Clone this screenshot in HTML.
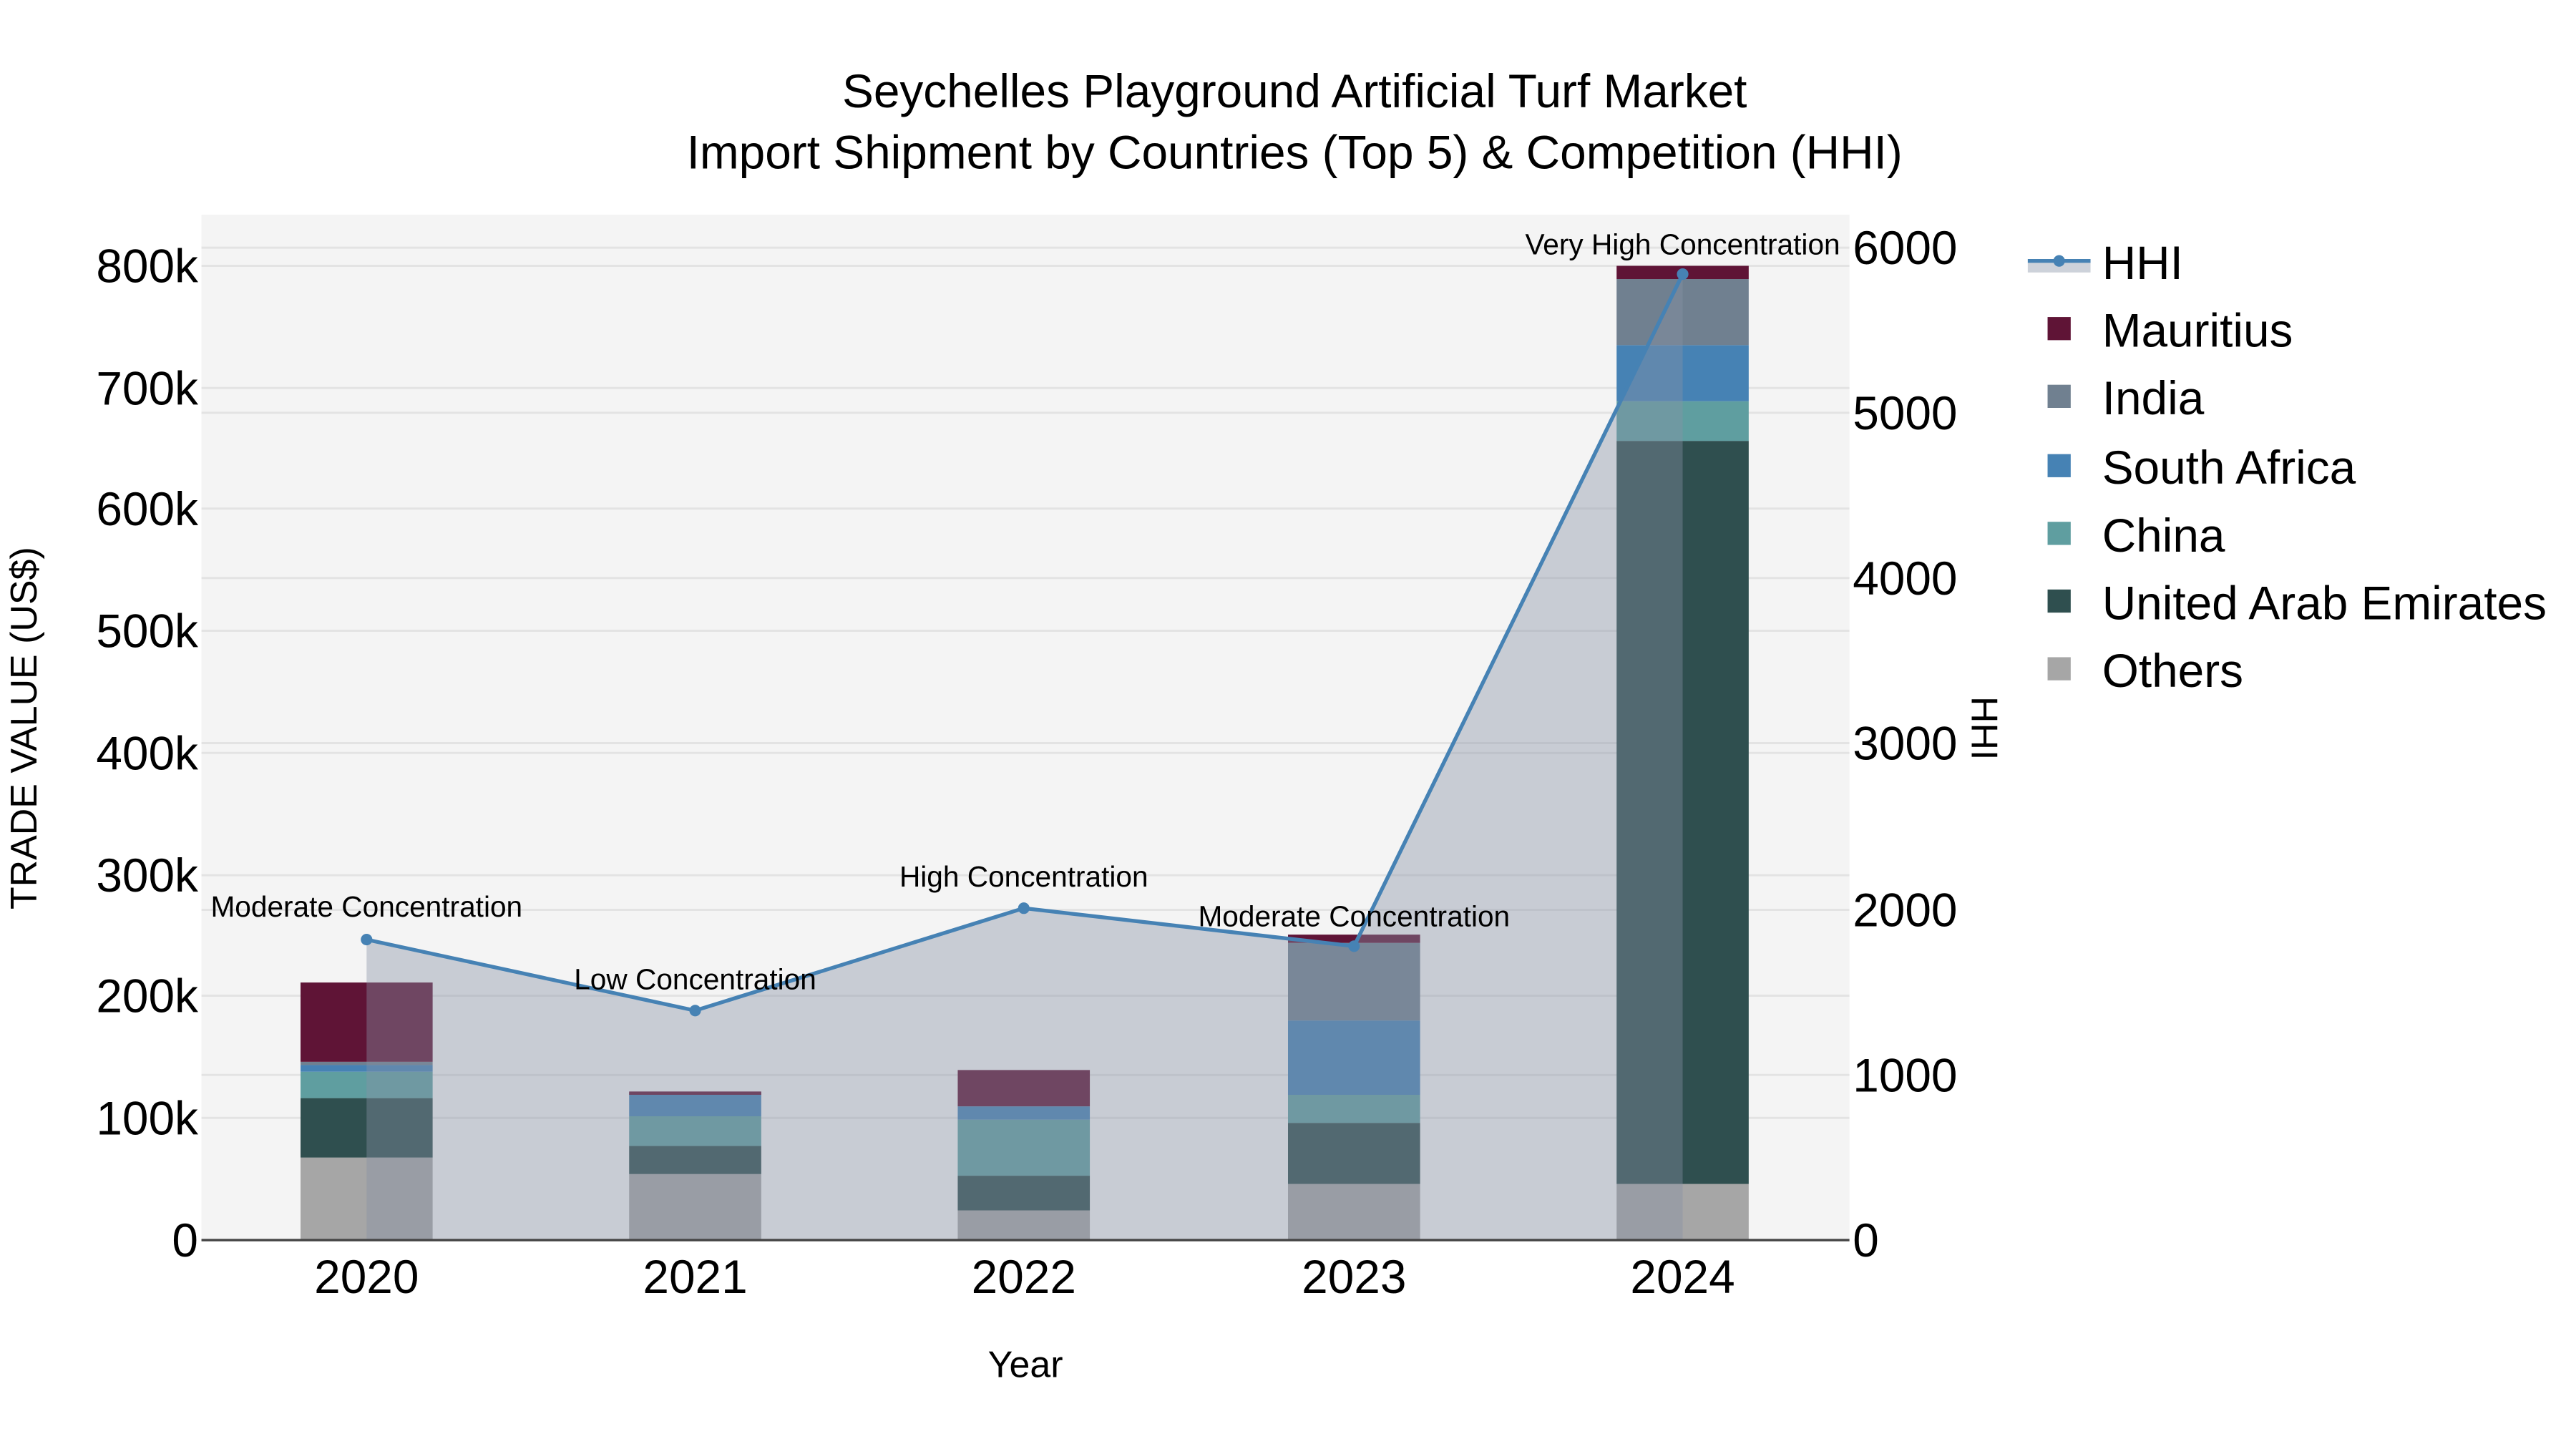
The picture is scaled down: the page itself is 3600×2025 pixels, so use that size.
<!DOCTYPE html>
<html><head><meta charset="utf-8"><style>html,body{margin:0;padding:0;background:#fff}svg{display:block}</style></head>
<body>
<svg width="3600" height="2025" viewBox="0 0 1560 877.5" xmlns="http://www.w3.org/2000/svg" font-family="'Liberation Sans', sans-serif">
<rect x="0" y="0" width="1560" height="877.5" fill="#fff"/>
<rect x="122" y="130" width="998" height="621" fill="#f4f4f4"/>
<g stroke="#e3e3e3" stroke-width="1.3">
<line x1="122" x2="1120" y1="677" y2="677"/><line x1="122" x2="1120" y1="603" y2="603"/><line x1="122" x2="1120" y1="530" y2="530"/><line x1="122" x2="1120" y1="456" y2="456"/><line x1="122" x2="1120" y1="382" y2="382"/><line x1="122" x2="1120" y1="308" y2="308"/><line x1="122" x2="1120" y1="235" y2="235"/><line x1="122" x2="1120" y1="161" y2="161"/>
<line x1="122" x2="1120" y1="651" y2="651"/><line x1="122" x2="1120" y1="551" y2="551"/><line x1="122" x2="1120" y1="450" y2="450"/><line x1="122" x2="1120" y1="350" y2="350"/><line x1="122" x2="1120" y1="250" y2="250"/><line x1="122" x2="1120" y1="150" y2="150"/>
</g>
<g>
<rect x="182" y="701" width="80" height="50" fill="#a6a6a6"/><rect x="182" y="665" width="80" height="36" fill="#2f4f4f"/><rect x="182" y="649" width="80" height="16" fill="#5f9ea0"/><rect x="182" y="645" width="80" height="4" fill="#4682b4"/><rect x="182" y="643" width="80" height="2" fill="#708090"/><rect x="182" y="595" width="80" height="48" fill="#5f1436"/>
<rect x="381" y="711" width="80" height="40" fill="#a6a6a6"/><rect x="381" y="694" width="80" height="17" fill="#2f4f4f"/><rect x="381" y="676" width="80" height="18" fill="#5f9ea0"/><rect x="381" y="663" width="80" height="13" fill="#4682b4"/><rect x="381" y="662" width="80" height="1" fill="#708090"/><rect x="381" y="661" width="80" height="2" fill="#5f1436"/>
<rect x="580" y="733" width="80" height="18" fill="#a6a6a6"/><rect x="580" y="712" width="80" height="21" fill="#2f4f4f"/><rect x="580" y="678" width="80" height="34" fill="#5f9ea0"/><rect x="580" y="670" width="80" height="8" fill="#4682b4"/><rect x="580" y="648" width="80" height="22" fill="#5f1436"/>
<rect x="780" y="717" width="80" height="34" fill="#a6a6a6"/><rect x="780" y="680" width="80" height="37" fill="#2f4f4f"/><rect x="780" y="663" width="80" height="17" fill="#5f9ea0"/><rect x="780" y="618" width="80" height="45" fill="#4682b4"/><rect x="780" y="571" width="80" height="47" fill="#708090"/><rect x="780" y="566" width="80" height="5" fill="#5f1436"/>
<rect x="979" y="717" width="80" height="34" fill="#a6a6a6"/><rect x="979" y="267" width="80" height="450" fill="#2f4f4f"/><rect x="979" y="243" width="80" height="24" fill="#5f9ea0"/><rect x="979" y="209" width="80" height="34" fill="#4682b4"/><rect x="979" y="169" width="80" height="40" fill="#708090"/><rect x="979" y="161" width="80" height="8" fill="#5f1436"/>
</g>
<polygon points="222,751 222,569 421,612 620,550 820,573 1019,166 1019,751" fill="rgb(134,146,166)" fill-opacity="0.4"/>
<line x1="122" x2="1120" y1="751" y2="751" stroke="#444" stroke-width="1.5"/>
<polyline points="222,569 421,612 620,550 820,573 1019,166" fill="none" stroke="#4682b4" stroke-width="2.3"/>
<g fill="#4682b4"><circle cx="222" cy="569" r="3.5"/><circle cx="421" cy="612" r="3.5"/><circle cx="620" cy="550" r="3.5"/><circle cx="820" cy="573" r="3.5"/><circle cx="1019" cy="166" r="3.5"/></g>
<g font-size="17.6" fill="#000" text-anchor="middle">
<text x="222" y="555">Moderate Concentration</text><text x="421" y="599">Low Concentration</text><text x="620" y="537">High Concentration</text><text x="820" y="561">Moderate Concentration</text><text x="1019" y="154">Very High Concentration</text>
</g>
<g font-size="28.5" fill="#000" text-anchor="middle">
<text x="784" y="65">Seychelles Playground Artificial Turf Market</text>
<text x="784" y="102">Import Shipment by Countries (Top 5) &amp; Competition (HHI)</text>
</g>
<g font-size="28.5" fill="#000" text-anchor="end">
<text x="120" y="761">0</text><text x="120" y="687">100k</text><text x="120" y="613">200k</text><text x="120" y="540">300k</text><text x="120" y="466">400k</text><text x="120" y="392">500k</text><text x="120" y="318">600k</text><text x="120" y="245">700k</text><text x="120" y="171">800k</text>
</g>
<g font-size="28.5" fill="#000">
<text x="1122" y="761">0</text><text x="1122" y="661">1000</text><text x="1122" y="561">2000</text><text x="1122" y="460">3000</text><text x="1122" y="360">4000</text><text x="1122" y="260">5000</text><text x="1122" y="160">6000</text>
</g>
<g font-size="28.5" fill="#000" text-anchor="middle">
<text x="222" y="783">2020</text><text x="421" y="783">2021</text><text x="620" y="783">2022</text><text x="820" y="783">2023</text><text x="1019" y="783">2024</text>
</g>
<text x="621" y="834" font-size="22.5" text-anchor="middle">Year</text>
<text transform="translate(22,441) rotate(-90)" font-size="22.5" text-anchor="middle">TRADE VALUE (US$)</text>
<text transform="translate(1194,441) rotate(90)" font-size="22.5" text-anchor="middle">HHI</text>
<rect x="1228" y="159" width="38" height="6" fill="#cdd2da"/>
<line x1="1228" x2="1266" y1="158" y2="158" stroke="#4682b4" stroke-width="2.3"/>
<circle cx="1247" cy="158" r="3.5" fill="#4682b4"/>
<g font-size="28.5" fill="#000">
<text x="1273" y="169">HHI</text><text x="1273" y="210">Mauritius</text><text x="1273" y="251">India</text><text x="1273" y="293">South Africa</text><text x="1273" y="334">China</text><text x="1273" y="375">United Arab Emirates</text><text x="1273" y="416">Others</text>
</g>
<rect x="1240" y="192" width="14" height="14" fill="#5f1436"/>
<rect x="1240" y="233" width="14" height="14" fill="#708090"/>
<rect x="1240" y="275" width="14" height="14" fill="#4682b4"/>
<rect x="1240" y="316" width="14" height="14" fill="#5f9ea0"/>
<rect x="1240" y="357" width="14" height="14" fill="#2f4f4f"/>
<rect x="1240" y="398" width="14" height="14" fill="#a6a6a6"/>
</svg>
</body></html>
